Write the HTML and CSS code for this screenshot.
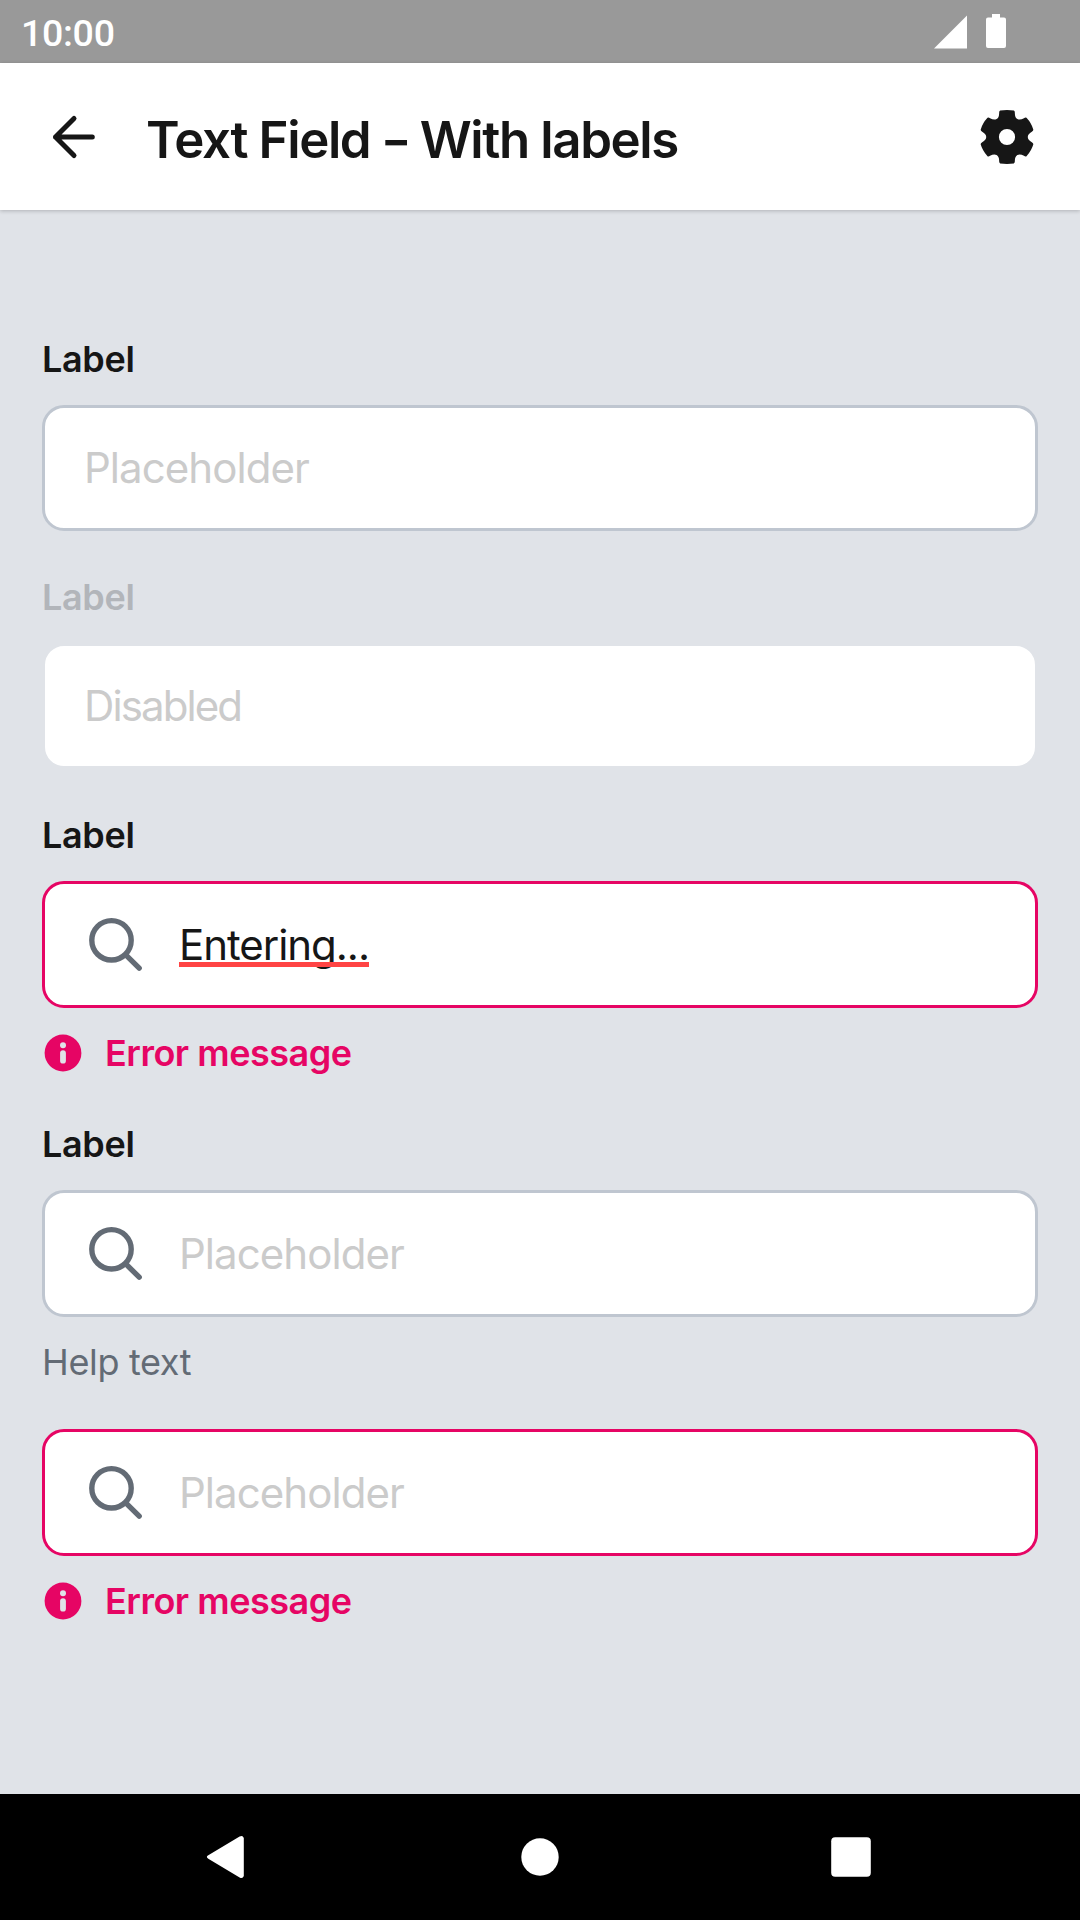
FILE: index.html
```html
<!DOCTYPE html>
<html lang="en">
<head>
<meta charset="utf-8">
<title>Text Field</title>
<link rel="stylesheet" href="styles.css">
</head>
<body>
<svg class="sprite" aria-hidden="true">
  <symbol id="search" viewBox="0 0 60 60">
    <circle cx="27.5" cy="26.3" r="19.7" fill="none" stroke="currentColor" stroke-width="5.4"/>
    <path d="M42 41.2 55.2 54.2" fill="none" stroke="currentColor" stroke-width="5.4" stroke-linecap="round"/>
  </symbol>
  <symbol id="info" viewBox="0 0 42 42">
    <circle cx="21" cy="21" r="18.4" fill="currentColor"/>
    <circle cx="21" cy="13.2" r="3" fill="#e0e3e8"/>
    <rect x="18.1" y="18.2" width="5.8" height="13.4" rx="2.9" fill="#e0e3e8"/>
  </symbol>
</svg>
<div class="statusbar">
  <span class="clock">10:00</span>
  <svg class="signal" viewBox="0 0 33 34"><path d="M0 33.500 33 0.500V33.500Z"/></svg>
  <svg class="battery" viewBox="0 0 20 34"><path d="M6 0h8v3.400h4a2 2 0 0 1 2 2V32a2 2 0 0 1-2 2H2a2 2 0 0 1-2-2V5.400a2 2 0 0 1 2-2h4Z"/></svg>
</div>
<header class="appbar">
  <svg class="back" viewBox="0 0 60 60"><path d="M49.300 30H12.500M31 11.500 12.500 30 31 48.500"/></svg>
  <h1 class="title">Text Field <span class="dash">-</span> With labels</h1>
  <svg class="gear" viewBox="-29.600 -29.600 59.200 59.200"><path fill-rule="evenodd" d="M26-7.200Q26-6 24.500-5.200 20.500-3 20.500 0 20.500 3 24.500 5.200 26 6 26 7.200 24.200 13.600 19.240 18.920 18.200 19.520 16.750 18.620 12.850 16.250 10.250 17.750 7.650 19.250 7.750 23.820 7.800 25.520 6.760 26.120 0 27 -6.760 26.120-7.800 25.520-7.750 23.820-7.650 19.250-10.250 17.750-12.850 16.250-16.750 18.620-18.200 19.520-19.240 18.920-24.200 13.600-26 7.200-26 6-24.500 5.200-20.500 3-20.500 0-20.500-3-24.500-5.200-26-6-26-7.200-24.200-13.600-19.240-18.920-18.200-19.520-16.750-18.620-12.850-16.250-10.250-17.750-7.650-19.250-7.750-23.820-7.800-25.520-6.760-26.120 0-27 6.760-26.120 7.800-25.520 7.750-23.820 7.650-19.250 10.250-17.750 12.850-16.250 16.750-18.620 18.200-19.520 19.240-18.920 24.200-13.600 26-7.200ZM0-8A8 8 0 1 0 0 8 8 8 0 1 0 0-8Z"/></svg>
</header>
<main class="form">
  <section class="group">
    <div class="label">Label</div>
    <div class="field short"><span class="placeholder">Placeholder</span></div>
  </section>
  <section class="group">
    <div class="label off">Label</div>
    <div class="field short disabled"><span class="placeholder">Disabled</span></div>
  </section>
  <section class="group">
    <div class="label">Label</div>
    <div class="field invalid"><svg class="search"><use href="#search"/></svg><span class="value">Entering...</span></div>
    <div class="message error"><svg class="info"><use href="#info"/></svg><span>Error message</span></div>
  </section>
  <section class="group after-error">
    <div class="label">Label</div>
    <div class="field"><svg class="search"><use href="#search"/></svg><span class="placeholder">Placeholder</span></div>
    <div class="message">Help text</div>
  </section>
  <section class="group after-help">
    <div class="field invalid"><svg class="search"><use href="#search"/></svg><span class="placeholder">Placeholder</span></div>
    <div class="message error"><svg class="info"><use href="#info"/></svg><span>Error message</span></div>
  </section>
</main>
<nav class="navbar">
  <svg viewBox="0 0 60 60"><path d="M9.300 28.300 40.600 9.500Q43.800 8 44.800 11V49Q43.800 52 40.600 50.500L9.300 31.700Q6.400 30 9.300 28.300Z"/></svg>
  <svg viewBox="0 0 60 60"><circle cx="30" cy="30" r="18.700"/></svg>
  <svg viewBox="0 0 60 60"><rect x="10.200" y="10.200" width="39.600" height="39.600" rx="4"/></svg>
</nav>
</body>
</html>
```
FILE: styles.css
```css
* { box-sizing: border-box; }

body {
  margin: 0;
  width: 1080px;
  height: 1920px;
  display: flex;
  flex-direction: column;
  overflow: hidden;
  background: #e0e3e8;
  color: #161616;
  font-family: Inter, "Liberation Sans", sans-serif;
}

svg { display: block; flex: none; }
.sprite { position: absolute; width: 0; height: 0; }

.statusbar {
  flex: none;
  height: 63px;
  padding: 0 74px 0 21px;
  display: flex;
  align-items: center;
  background: #999;
  color: #fff;
  fill: #fff;
}
.clock {
  flex: 1;
  padding-top: 2px;
  font: 500 37.500px/44px Roboto, sans-serif;
  letter-spacing: -.3px;
}
.signal { width: 33px; height: 34px; margin-right: 19px; }
.battery { width: 20px; height: 34px; margin-top: -1px; }

.appbar {
  flex: none;
  height: 147px;
  padding: 0 43px;
  display: flex;
  align-items: center;
  background: #fff;
  box-shadow: 0 1px 4px rgba(0, 0, 0, .22);
}
.back {
  width: 60px;
  height: 60px;
  fill: none;
  stroke: #161616;
  stroke-width: 5;
  stroke-linecap: round;
  stroke-linejoin: round;
}
.title {
  flex: 1;
  margin: 0;
  padding: 7px 0 0 43px;
  font-size: 51px;
  line-height: 62px;
  font-weight: 600;
  letter-spacing: -1.380px;
}
.dash {
  display: inline-block;
  transform: scaleX(1.3);
  margin: 0 2px;
}
.gear { width: 60px; height: 60px; margin-right: .5px; fill: #161616; }

.form {
  flex: 1;
  min-height: 0;
  padding: 127px 42px 0;
}
.group + .group { margin-top: 44px; }
.group.after-error { margin-top: 47px; }
.group.after-help { margin-top: 45px; }

.label {
  height: 44px;
  margin-bottom: 24px;
  font-size: 36px;
  line-height: 44px;
  font-weight: 600;
  letter-spacing: -.350px;
}
.label.off { color: #b2b5ba; }

.field {
  height: 127px;
  padding: 0 39px 2px;
  display: flex;
  align-items: center;
  border: 3px solid #bfc6d0;
  border-radius: 22px;
  background: #fff;
  font-size: 42px;
  line-height: 52px;
}
.field.short { height: 126px; }
.field.disabled { border-color: #e0e3e8; }
.field.invalid { border-color: #e60564; }
.placeholder {
  padding-top: 2px;
  color: #cbcbcb;
  letter-spacing: -.950px;
}
.disabled .placeholder { letter-spacing: -1.900px; }
.search { width: 60px; height: 60px; color: #636b75; margin-right: 35px; }

.value {
  position: relative;
  padding-top: 2px;
  letter-spacing: -1.040px;
}
.value::after {
  content: "";
  position: absolute;
  left: 0;
  right: 0;
  top: 45px;
  height: 5.500px;
  background: #ff4444;
}

.message {
  height: 44px;
  margin-top: 23px;
  display: flex;
  align-items: center;
  font-size: 36px;
  line-height: 44px;
  color: #636b75;
  letter-spacing: -.350px;
}
.message.error { color: #e60564; font-weight: 600; letter-spacing: -.500px; }
.info { width: 42px; height: 42px; margin-right: 21px; }

.navbar {
  flex: none;
  height: 126px;
  display: flex;
  justify-content: center;
  align-items: center;
  gap: 251px;
  background: #000;
  fill: #fff;
}
.navbar svg { width: 60px; height: 60px; }
```
